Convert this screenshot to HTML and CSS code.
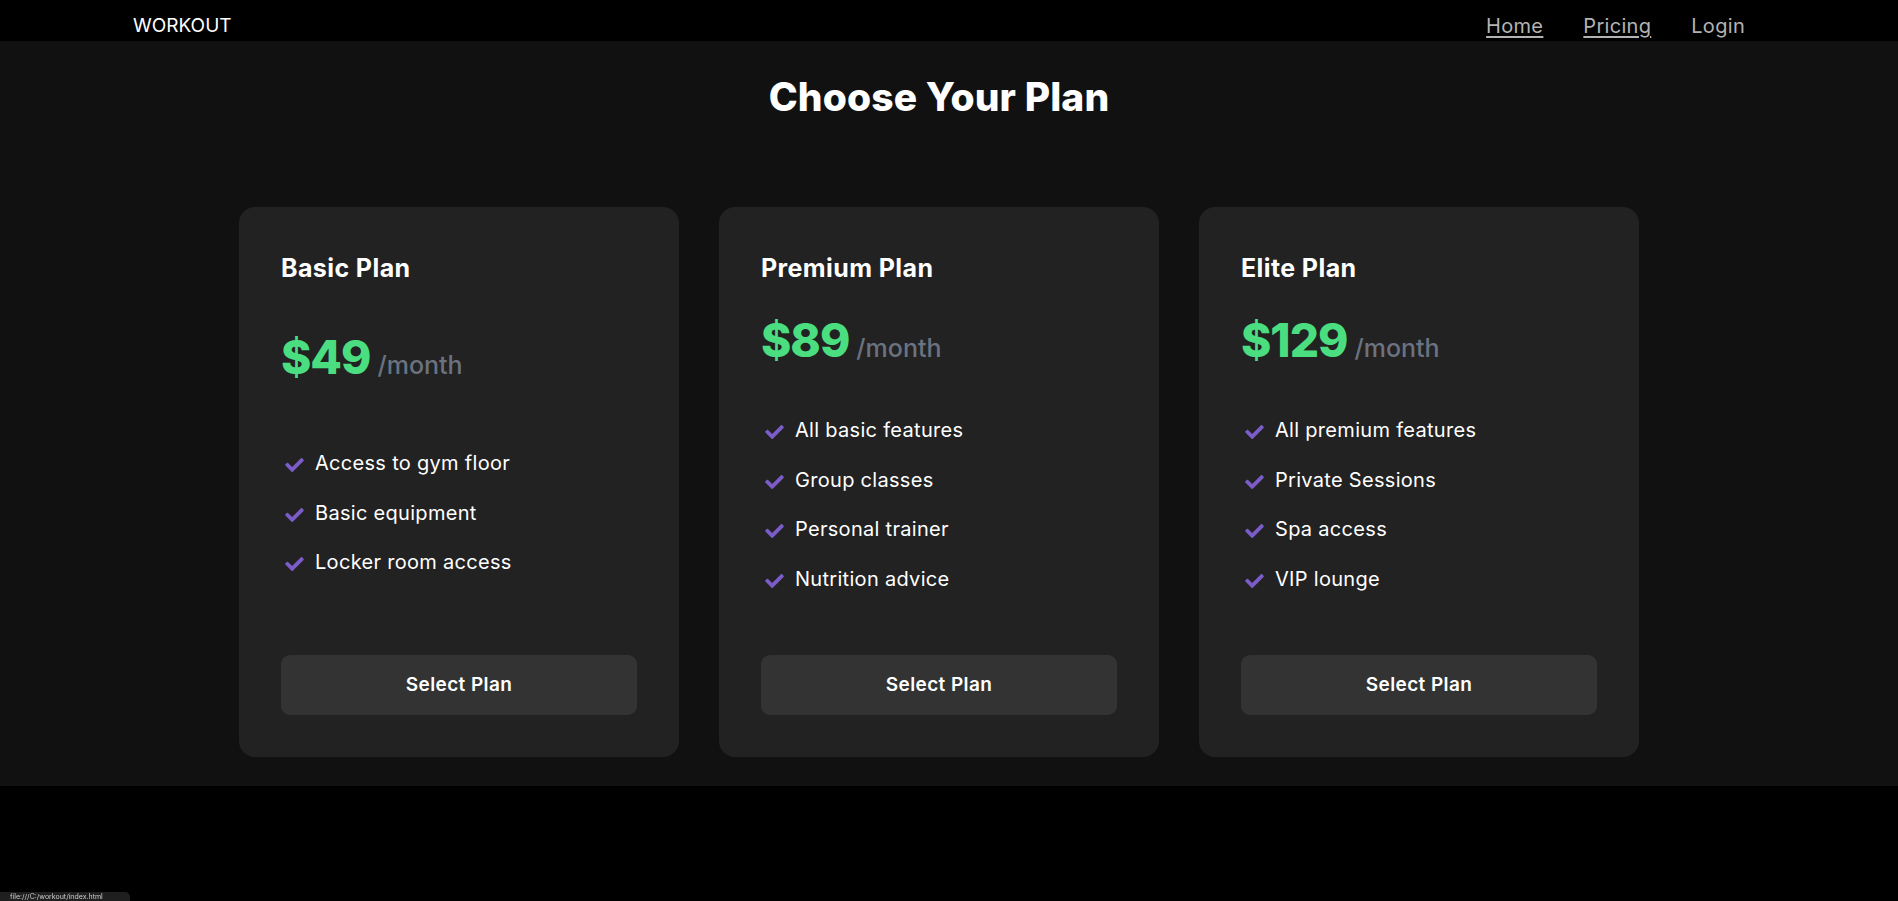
FILE: index.html
```html
<!DOCTYPE html>
<html lang="en">
<head>
<meta charset="utf-8">
<title>Workout - Pricing</title>
<link rel="stylesheet" href="styles.css">
</head>
<body>
<header class="topbar">
  <div class="topbar-inner">
    <div class="logo">WORKOUT</div>
    <nav class="nav">
      <a class="nav-link underlined" href="#">Home</a>
      <a class="nav-link underlined" href="#">Pricing</a>
      <a class="nav-link" href="#">Login</a>
    </nav>
  </div>
</header>
<main class="pricing">
  <div class="pricing-inner">
    <h1 class="pricing-title">Choose Your Plan</h1>
    <div class="cards">
      <div class="card">
        <h2 class="card-title">Basic Plan</h2>
        <div class="price"><span class="amount">$49</span><span class="period">/month</span></div>
        <ul class="features">
          <li><svg class="check" viewBox="0 64 512 384"><path d="M173.898 439.404l-166.4-166.4c-9.997-9.997-9.997-26.206 0-36.204l36.203-36.204c9.997-9.998 26.207-9.998 36.204 0L192 312.69 432.095 72.596c9.997-9.997 26.207-9.997 36.204 0l36.203 36.204c9.997 9.997 9.997 26.206 0 36.204l-294.4 294.401c-9.998 9.997-26.207 9.997-36.204-.001z"/></svg><span>Access to gym floor</span></li>
          <li><svg class="check" viewBox="0 64 512 384"><path d="M173.898 439.404l-166.4-166.4c-9.997-9.997-9.997-26.206 0-36.204l36.203-36.204c9.997-9.998 26.207-9.998 36.204 0L192 312.69 432.095 72.596c9.997-9.997 26.207-9.997 36.204 0l36.203 36.204c9.997 9.997 9.997 26.206 0 36.204l-294.4 294.401c-9.998 9.997-26.207 9.997-36.204-.001z"/></svg><span>Basic equipment</span></li>
          <li><svg class="check" viewBox="0 64 512 384"><path d="M173.898 439.404l-166.4-166.4c-9.997-9.997-9.997-26.206 0-36.204l36.203-36.204c9.997-9.998 26.207-9.998 36.204 0L192 312.69 432.095 72.596c9.997-9.997 26.207-9.997 36.204 0l36.203 36.204c9.997 9.997 9.997 26.206 0 36.204l-294.4 294.401c-9.998 9.997-26.207 9.997-36.204-.001z"/></svg><span>Locker room access</span></li>
        </ul>
        <button class="select-btn">Select Plan</button>
      </div>
      <div class="card">
        <h2 class="card-title">Premium Plan</h2>
        <div class="price"><span class="amount">$89</span><span class="period">/month</span></div>
        <ul class="features">
          <li><svg class="check" viewBox="0 64 512 384"><path d="M173.898 439.404l-166.4-166.4c-9.997-9.997-9.997-26.206 0-36.204l36.203-36.204c9.997-9.998 26.207-9.998 36.204 0L192 312.69 432.095 72.596c9.997-9.997 26.207-9.997 36.204 0l36.203 36.204c9.997 9.997 9.997 26.206 0 36.204l-294.4 294.401c-9.998 9.997-26.207 9.997-36.204-.001z"/></svg><span>All basic features</span></li>
          <li><svg class="check" viewBox="0 64 512 384"><path d="M173.898 439.404l-166.4-166.4c-9.997-9.997-9.997-26.206 0-36.204l36.203-36.204c9.997-9.998 26.207-9.998 36.204 0L192 312.69 432.095 72.596c9.997-9.997 26.207-9.997 36.204 0l36.203 36.204c9.997 9.997 9.997 26.206 0 36.204l-294.4 294.401c-9.998 9.997-26.207 9.997-36.204-.001z"/></svg><span>Group classes</span></li>
          <li><svg class="check" viewBox="0 64 512 384"><path d="M173.898 439.404l-166.4-166.4c-9.997-9.997-9.997-26.206 0-36.204l36.203-36.204c9.997-9.998 26.207-9.998 36.204 0L192 312.69 432.095 72.596c9.997-9.997 26.207-9.997 36.204 0l36.203 36.204c9.997 9.997 9.997 26.206 0 36.204l-294.4 294.401c-9.998 9.997-26.207 9.997-36.204-.001z"/></svg><span>Personal trainer</span></li>
          <li><svg class="check" viewBox="0 64 512 384"><path d="M173.898 439.404l-166.4-166.4c-9.997-9.997-9.997-26.206 0-36.204l36.203-36.204c9.997-9.998 26.207-9.998 36.204 0L192 312.69 432.095 72.596c9.997-9.997 26.207-9.997 36.204 0l36.203 36.204c9.997 9.997 9.997 26.206 0 36.204l-294.4 294.401c-9.998 9.997-26.207 9.997-36.204-.001z"/></svg><span>Nutrition advice</span></li>
        </ul>
        <button class="select-btn">Select Plan</button>
      </div>
      <div class="card">
        <h2 class="card-title">Elite Plan</h2>
        <div class="price"><span class="amount">$129</span><span class="period">/month</span></div>
        <ul class="features">
          <li><svg class="check" viewBox="0 64 512 384"><path d="M173.898 439.404l-166.4-166.4c-9.997-9.997-9.997-26.206 0-36.204l36.203-36.204c9.997-9.998 26.207-9.998 36.204 0L192 312.69 432.095 72.596c9.997-9.997 26.207-9.997 36.204 0l36.203 36.204c9.997 9.997 9.997 26.206 0 36.204l-294.4 294.401c-9.998 9.997-26.207 9.997-36.204-.001z"/></svg><span>All premium features</span></li>
          <li><svg class="check" viewBox="0 64 512 384"><path d="M173.898 439.404l-166.4-166.4c-9.997-9.997-9.997-26.206 0-36.204l36.203-36.204c9.997-9.998 26.207-9.998 36.204 0L192 312.69 432.095 72.596c9.997-9.997 26.207-9.997 36.204 0l36.203 36.204c9.997 9.997 9.997 26.206 0 36.204l-294.4 294.401c-9.998 9.997-26.207 9.997-36.204-.001z"/></svg><span>Private Sessions</span></li>
          <li><svg class="check" viewBox="0 64 512 384"><path d="M173.898 439.404l-166.4-166.4c-9.997-9.997-9.997-26.206 0-36.204l36.203-36.204c9.997-9.998 26.207-9.998 36.204 0L192 312.69 432.095 72.596c9.997-9.997 26.207-9.997 36.204 0l36.203 36.204c9.997 9.997 9.997 26.206 0 36.204l-294.4 294.401c-9.998 9.997-26.207 9.997-36.204-.001z"/></svg><span>Spa access</span></li>
          <li><svg class="check" viewBox="0 64 512 384"><path d="M173.898 439.404l-166.4-166.4c-9.997-9.997-9.997-26.206 0-36.204l36.203-36.204c9.997-9.998 26.207-9.998 36.204 0L192 312.69 432.095 72.596c9.997-9.997 26.207-9.997 36.204 0l36.203 36.204c9.997 9.997 9.997 26.206 0 36.204l-294.4 294.401c-9.998 9.997-26.207 9.997-36.204-.001z"/></svg><span>VIP lounge</span></li>
        </ul>
        <button class="select-btn">Select Plan</button>
      </div>
    </div>
  </div>
</main>
<div class="status-bubble">file:///C:/workout/index.html</div>
</body>
</html>
```
FILE: styles.css
```css
* { box-sizing: border-box; }

html, body {
  margin: 0;
  padding: 0;
  background: #000;
  color: #fff;
  font-family: "Inter", "Open Sans", "DejaVu Sans", sans-serif;
}

.topbar {
  background: #000;
  height: 41px;
}

.topbar-inner {
  width: calc(100% - 20px);
  height: 41px;
  padding: 13px 133px 0 133px;
  display: flex;
  justify-content: space-between;
  align-items: flex-start;
}

.logo {
  font-size: 19px;
  line-height: 24px;
  color: #fff;
  font-weight: 400;
  margin-top: 1px;
}

.nav {
  display: flex;
  gap: 40px;
}

.nav-link {
  font-size: 20px;
  line-height: 26px;
  letter-spacing: 0.3px;
  color: #b3b3b3;
  text-decoration: none;
}

.nav-link.underlined {
  text-decoration: underline;
  text-underline-offset: 3px;
}

.pricing {
  background: #111;
  padding: 32px 0 29px 0;
}

.pricing-inner {
  width: calc(100% - 20px);
}

.pricing-title {
  margin: 0;
  text-align: center;
  font-size: 39px;
  line-height: 48px;
  font-weight: 800;
  letter-spacing: 0.1px;
}

.cards {
  width: 1400px;
  margin: 86px auto 0 auto;
  display: grid;
  grid-template-columns: repeat(3, 1fr);
  gap: 40px;
}

.card {
  background: #222;
  border-radius: 16px;
  padding: 42px;
  display: flex;
  flex-direction: column;
  justify-content: space-between;
}

.card-title {
  margin: 0 0 29px 0;
  font-size: 25px;
  line-height: 38px;
  font-weight: 700;
  letter-spacing: 0.4px;
}

.price {
  font-size: 46px;
  line-height: 48px;
  margin-bottom: 51px;
  white-space: nowrap;
}

.amount {
  font-size: 46px;
  line-height: 48px;
  font-weight: 800;
  color: #4ade80;
  letter-spacing: -1px;
}

.period {
  font-size: 25px;
  line-height: 1;
  font-weight: 500;
  color: #6b7280;
  margin-left: 7px;
}

.features {
  list-style: none;
  margin: 0 0 61px 0;
  padding: 0;
  display: flex;
  flex-direction: column;
  gap: 19.6px;
}

.features li {
  display: flex;
  align-items: center;
  font-size: 20px;
  line-height: 30px;
  letter-spacing: 0.3px;
  color: #fff;
}

.check {
  width: 19px;
  height: 14px;
  fill: #7b5cc9;
  margin: 4px 11px 0 4px;
  flex-shrink: 0;
}

.select-btn {
  width: 100%;
  height: 60px;
  border: none;
  border-radius: 9px;
  background: #333;
  color: #fff;
  font-family: inherit;
  font-size: 19px;
  font-weight: 600;
  letter-spacing: 0.4px;
  cursor: pointer;
}

.status-bubble {
  position: fixed;
  left: 0;
  bottom: 0;
  width: 130px;
  height: 9px;
  overflow: hidden;
  background: #1f1f1f;
  border-top-right-radius: 5px;
  color: #ccc;
  font-size: 7px;
  line-height: 9px;
  padding: 0 0 0 10px;
  white-space: nowrap;
}
```
